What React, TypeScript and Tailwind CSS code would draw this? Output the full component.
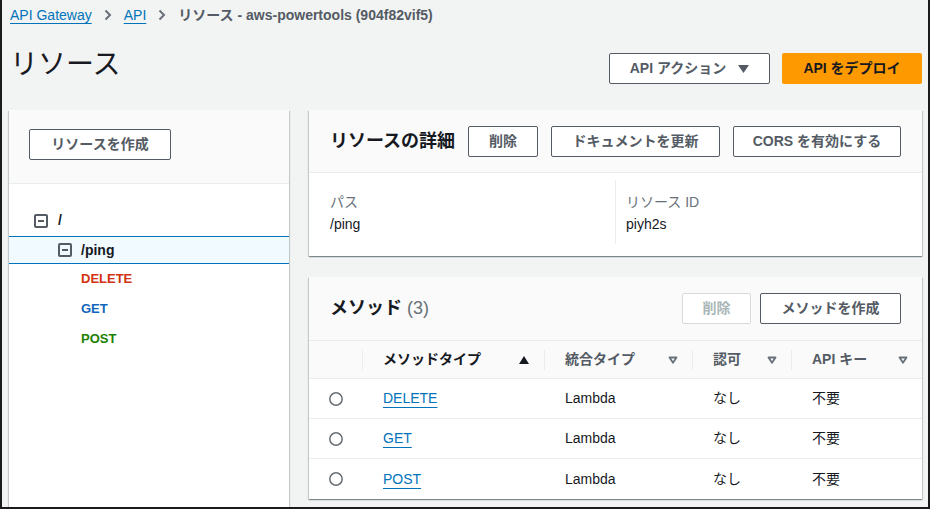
import type { ReactNode } from "react";

const shadow =
  "shadow-[0_1px_1px_0_rgba(0,28,36,0.3),1px_1px_1px_0_rgba(0,28,36,0.15),-1px_1px_1px_0_rgba(0,28,36,0.15)]";

function Btn({
  children,
  className = "",
  disabled,
}: {
  children: ReactNode;
  className?: string;
  disabled?: boolean;
}) {
  return (
    <button
      className={
        "flex h-[31px] shrink-0 items-center justify-center rounded-[2px] border bg-white text-[14px] font-bold " +
        (disabled ? "border-[#d5dbdb] text-[#aab7b8] " : "border-[#545b64] text-[#545b64] ") +
        className
      }
    >
      {children}
    </button>
  );
}

function Chevron() {
  return (
    <svg width="8" height="12" viewBox="0 0 8 12" className="mx-[12px]">
      <path d="M1.5 1.5 6 6l-4.5 4.5" fill="none" stroke="#687078" strokeWidth="2" />
    </svg>
  );
}

function Collapse() {
  return (
    <svg width="14" height="14" viewBox="0 0 14 14" className="shrink-0">
      <rect x="1" y="1" width="12" height="12" rx="1" fill="none" stroke="#545b64" strokeWidth="2" />
      <path d="M4 7h6" stroke="#545b64" strokeWidth="2" />
    </svg>
  );
}

function Sort({ active }: { active?: boolean }) {
  if (active)
    return (
      <svg width="12" height="10" viewBox="0 0 12 10">
        <path d="M1 9 6 1l5 8z" fill="#16191f" />
      </svg>
    );
  return (
    <svg width="10" height="8" viewBox="0 0 10 8">
      <path d="M1.5 1.5h7L5 6.8z" fill="none" stroke="#687078" strokeWidth="1.8" strokeLinejoin="round" />
    </svg>
  );
}

function Radio() {
  return (
    <svg width="14" height="14" viewBox="0 0 14 14">
      <circle cx="7" cy="7" r="6.2" fill="white" stroke="#687078" strokeWidth="1.5" />
    </svg>
  );
}

const methods = ["DELETE", "GET", "POST"];

function HeadCell({ label, active, w }: { label: string; active?: boolean; w: string }) {
  return (
    <div className={"relative flex items-center justify-between pl-[21px] pr-[14px] " + w}>
      <span className="absolute left-0 top-[9px] h-[20px] w-px bg-[#eaeded]" />
      <span className={active ? "text-[#16191f]" : "text-[#545b64]"}>{label}</span>
      <Sort active={active} />
    </div>
  );
}

export default function App() {
  return (
    <div className="flex h-[509px] w-[930px] flex-col overflow-hidden border-x-2 border-b-2 border-[#1b1b1b] bg-[#f2f3f3] font-['Liberation_Sans','Noto_Sans_CJK_JP',sans-serif] text-[14px] text-[#16191f]">
      <div className="pl-[7px] pr-[6px]">
        <nav className="flex h-[30px] items-center pl-[1px]">
          <a className="text-[#0073bb] underline underline-offset-[3px]">API Gateway</a>
          <Chevron />
          <a className="text-[#0073bb] underline underline-offset-[3px]">API</a>
          <Chevron />
          <span className="font-bold text-[#545b64]">リソース - aws-powertools (904f82vif5)</span>
        </nav>
        <div className="mt-[10px] flex items-start justify-between">
          <h1 className="pl-[1px] text-[28px] font-normal leading-[50px] text-[#16191f]">リソース</h1>
          <div className="mt-[13px] flex gap-[12px]">
            <Btn className="w-[161px] gap-[12px]">
              API アクション
              <svg width="11" height="8" viewBox="0 0 11 8">
                <path d="M0 0h11L5.5 8z" fill="#545b64" />
              </svg>
            </Btn>
            <button className="flex h-[31px] w-[140px] items-center justify-center rounded-[2px] bg-[#ff9900] text-[14px] font-bold text-[#16191f]">
              API をデプロイ
            </button>
          </div>
        </div>
      </div>

      <div className="mt-[20px] flex flex-1 gap-[20px] pl-[7px] pr-[6px]">
        <aside className={"flex w-[280px] shrink-0 flex-col bg-white " + shadow}>
          <div className="h-[74px] border-b border-[#eaeded] bg-[#fafafa] pl-[20px] pt-[19px]">
            <Btn className="w-[142px]">リソースを作成</Btn>
          </div>
          <div className="pt-[21px] text-[14px] font-bold">
            <div className="flex h-[31px] items-center gap-[10px] pl-[25px]">
              <Collapse />
              <span>/</span>
            </div>
            <div className="flex h-[28px] items-center gap-[9px] border-y border-[#0073bb] bg-[#f1faff] pl-[49px]">
              <Collapse />
              <span>/ping</span>
            </div>
            <div className="flex h-[30px] items-center pl-[72px] text-[13px] text-[#d13212]">DELETE</div>
            <div className="flex h-[30px] items-center pl-[72px] text-[13px] text-[#1166bb]">GET</div>
            <div className="flex h-[30px] items-center pl-[72px] text-[13px] text-[#1d8102]">POST</div>
          </div>
        </aside>

        <main className="flex flex-1 flex-col gap-[21px]">
          <section className={"bg-white " + shadow}>
            <div className="flex h-[63px] items-center justify-between border-b border-[#eaeded] bg-[#fafafa] px-[21px]">
              <h2 className="text-[18px] font-bold">リソースの詳細</h2>
              <div className="flex gap-[13px]">
                <Btn className="w-[70px]">削除</Btn>
                <Btn className="w-[169px]">ドキュメントを更新</Btn>
                <Btn className="w-[168px]">CORS を有効にする</Btn>
              </div>
            </div>
            <div className="grid grid-cols-[285px_1fr] pb-[12px] pl-[21px] pr-[21px] pt-[7px]">
              <div className="pb-[9px] pt-[11px] leading-[22px]">
                <div className="text-[#687078]">パス</div>
                <div>/ping</div>
              </div>
              <div className="border-l border-[#eaeded] pb-[9px] pl-[10px] pt-[11px] leading-[22px]">
                <div className="text-[#687078]">リソース ID</div>
                <div>piyh2s</div>
              </div>
            </div>
          </section>

          <section className={"bg-white " + shadow}>
            <div className="flex h-[64px] items-center justify-between border-b border-[#eaeded] bg-[#fafafa] px-[21px]">
              <h2 className="text-[18px] font-bold">
                メソッド <span className="font-normal text-[#687078]">(3)</span>
              </h2>
              <div className="flex gap-[9px]">
                <Btn disabled className="w-[69px]">削除</Btn>
                <Btn className="w-[141px]">メソッドを作成</Btn>
              </div>
            </div>
            <div className="flex h-[38px] border-b border-[#eaeded] bg-[#fafafa] font-bold">
              <div className="w-[53px]" />
              <HeadCell label="メソッドタイプ" active w="w-[182px]" />
              <HeadCell label="統合タイプ" w="w-[148px]" />
              <HeadCell label="認可" w="w-[99px]" />
              <HeadCell label="API キー" w="flex-1" />
            </div>
            {methods.map((m, i) => (
              <div
                key={m}
                className={"flex h-[40px] items-center " + (i < methods.length - 1 ? "border-b border-[#eaeded]" : "")}
              >
                <div className="flex w-[53px] justify-end pr-[19px]">
                  <Radio />
                </div>
                <div className="w-[182px] pl-[21px]">
                  <a className="text-[#0073bb] underline underline-offset-[4px]">{m}</a>
                </div>
                <div className="w-[148px] pl-[21px]">Lambda</div>
                <div className="w-[99px] pl-[21px]">なし</div>
                <div className="flex-1 pl-[21px]">不要</div>
              </div>
            ))}
          </section>
        </main>
      </div>
    </div>
  );
}
